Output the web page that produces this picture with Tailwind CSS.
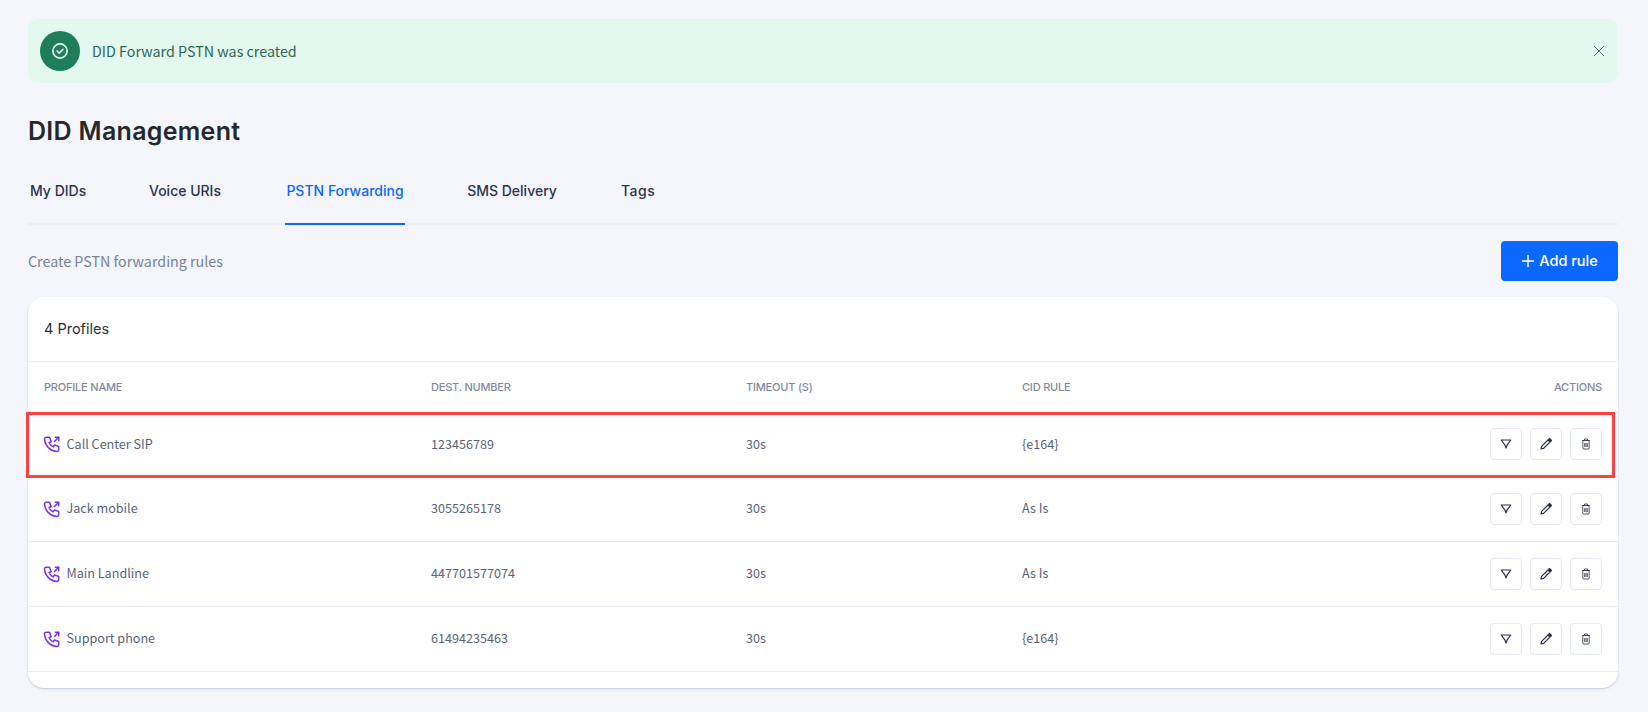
<!DOCTYPE html>
<html lang="en">
<head>
    <meta charset="UTF-8">
    <title>DID Management</title>
    <script src="https://cdn.jsdelivr.net/npm/@tailwindcss/browser@4"></script>
</head>
<body class="bg-[#f4f6fb] font-['Noto_Sans_CJK_SC','Noto_Sans',sans-serif] h-[712px] overflow-hidden">
    <main class="relative pl-[28px] pr-[30px] pt-[19px]">
        <!-- Alert -->
        <div class="flex items-center h-[64px] rounded-[10px] bg-[#e3f8ef] pl-[12px] pr-[14px]">
            <div class="flex items-center justify-center w-[40px] h-[40px] rounded-full bg-[#1e7e5c]">
                <svg class="w-[20px] h-[20px]" viewBox="0 0 24 24" fill="none" stroke="#e3f8ef" stroke-width="2" stroke-linecap="round" stroke-linejoin="round"><circle cx="12" cy="12" r="8.5"/><path d="M8.5 12l2.5 2.5l4.5 -4.5"/></svg>
            </div>
            <span class="ml-[12px] text-[14.3px] text-[#2f6650]">DID Forward PSTN was created</span>
            <svg class="ml-auto w-[10px] h-[10px]" viewBox="0 0 10 10" fill="none" stroke="#5f7a70" stroke-width="1"><path d="M0 0l10 10M10 0L0 10"/></svg>
        </div>

        <h1 class="mt-[30px] text-[25px] leading-[36px] font-semibold tracking-[0.3px] text-[#25272e] font-['Inter',sans-serif]">DID Management</h1>

        <!-- Tabs -->
        <nav class="mt-[16px] flex h-[60px] border-b-2 border-[#ebeff4] font-['Inter',sans-serif] text-[14px] font-medium text-[#2d3350] whitespace-nowrap">
            <a class="w-[58px] pt-[15px] pl-[2px] h-[60px]">My DIDs</a>
            <a class="ml-[60px] w-[78px] pt-[15px] h-[60px] text-center">Voice URIs</a>
            <a class="ml-[61px] w-[120px] pt-[15px] h-[60px] text-center text-[#0a68ff] border-b-2 border-[#0a68ff]">PSTN Forwarding</a>
            <a class="ml-[61px] w-[92px] pt-[15px] h-[60px] text-center">SMS Delivery</a>
            <a class="ml-[63px] pt-[15px] h-[60px] tracking-[0.5px]">Tags</a>
        </nav>

        <div class="mt-[16px] flex items-center justify-between h-[40px]">
            <p class="text-[14.3px] text-[#76829a]">Create PSTN forwarding rules</p>
            <button class="flex items-center justify-center gap-[4px] w-[117px] h-[40px] rounded-[4px] bg-[#0a68ff] text-white text-[14.5px] font-medium font-['Inter',sans-serif]">
                <svg class="w-[14px] h-[14px]" viewBox="0 0 14 14" fill="none" stroke="white" stroke-width="1.5"><path d="M7 1v12M1 7h12"/></svg>
                Add rule
            </button>
        </div>

        <!-- Table card -->
        <section class="mt-[16px] h-[391px] rounded-[16px] bg-white shadow-[0_1px_2px_rgba(100,116,160,0.35)] overflow-hidden">
            <div class="h-[65px] px-[16px] flex items-center border-b border-[#eef0f4] font-['Inter',sans-serif] text-[14.5px] text-[#2b2f38]">4 Profiles</div>
            <table class="w-full table-fixed">
                <thead>
                    <tr class="h-[50px] text-[11px] font-medium tracking-[-0.2px] text-[#7f8ba3] font-['Inter',sans-serif]">
                        <th class="w-[387px] pl-[16px] text-left font-medium">PROFILE NAME</th>
                        <th class="w-[315px] pl-[16px] text-left font-medium">DEST. NUMBER</th>
                        <th class="w-[276px] pl-[16px] text-left font-medium">TIMEOUT (S)</th>
                        <th class="pl-[16px] text-left font-medium">CID RULE</th>
                        <th class="w-[200px] pr-[16px] text-right font-medium">ACTIONS</th>
                    </tr>
                </thead>
                <tbody class="text-[12.6px] text-[#5a6478]">
                    <tr class="h-[64px] border-t border-[#e9edf3]">
                        <td class="pl-[16px]"><div class="flex items-center gap-[5px]">
                            <svg class="-ml-[2.5px] w-[20px] h-[20px] text-[#7a2ff0]" viewBox="0 0 24 24" fill="none" stroke="currentColor" stroke-width="1.8" stroke-linecap="round" stroke-linejoin="round"><path d="M5 4h4l2 5l-2.5 1.5a11 11 0 0 0 5 5l1.5 -2.5l5 2v4a2 2 0 0 1 -2 2a16 16 0 0 1 -15 -15a2 2 0 0 1 2 -2"/><path d="M15 9l5 -5"/><path d="M16 4h4v4"/></svg>
                            Call Center SIP</div></td>
                        <td class="pl-[16px]">123456789</td>
                        <td class="pl-[16px]">30s</td>
                        <td class="pl-[16px]">{e164}</td>
                        <td class="pr-[16px]"><div class="flex justify-end gap-[8px]">
                            <button class="flex items-center justify-center w-[32px] h-[32px] rounded-[4px] border border-[#e4e8f1]"><svg class="w-[14px] h-[14px]" viewBox="0 0 14 14" fill="none" stroke="#2d3350" stroke-width="1.2" stroke-linejoin="round"><path d="M2.2 3h9.6L8 8.200L7 11L6 8.200z"/></svg></button>
                            <button class="flex items-center justify-center w-[32px] h-[32px] rounded-[4px] border border-[#e4e8f1]"><svg class="w-[14px] h-[14px]" viewBox="0 0 14 14" fill="none" stroke="#2d3350" stroke-width="1.2" stroke-linejoin="round"><path d="M2 12l.6-2.6L9 3l2 2l-6.4 6.4z"/><path d="M9.5 2.5l1-1l2 2l-1 1z" fill="#2d3350"/></svg></button>
                            <button class="flex items-center justify-center w-[32px] h-[32px] rounded-[4px] border border-[#e4e8f1]"><svg class="w-[14px] h-[14px]" viewBox="0 0 14 14" fill="none" stroke="#3d4356" stroke-width="0.9"><path d="M3 3.500h8M5.500 3.500V2h3v1.500"/><rect x="3.800" y="3.500" width="6.400" height="8.500" rx="1"/><path d="M5.700 6v4M7 6v4M8.300 6v4"/></svg></button>
                        </div></td>
                    </tr>
                    <tr class="h-[65px] border-t border-[#e9edf3]">
                        <td class="pl-[16px]"><div class="flex items-center gap-[5px]">
                            <svg class="-ml-[2.5px] w-[20px] h-[20px] text-[#7a2ff0]" viewBox="0 0 24 24" fill="none" stroke="currentColor" stroke-width="1.8" stroke-linecap="round" stroke-linejoin="round"><path d="M5 4h4l2 5l-2.5 1.5a11 11 0 0 0 5 5l1.5 -2.5l5 2v4a2 2 0 0 1 -2 2a16 16 0 0 1 -15 -15a2 2 0 0 1 2 -2"/><path d="M15 9l5 -5"/><path d="M16 4h4v4"/></svg>
                            Jack mobile</div></td>
                        <td class="pl-[16px]">3055265178</td>
                        <td class="pl-[16px]">30s</td>
                        <td class="pl-[16px]">As Is</td>
                        <td class="pr-[16px]"><div class="flex justify-end gap-[8px]">
                            <button class="flex items-center justify-center w-[32px] h-[32px] rounded-[4px] border border-[#e4e8f1]"><svg class="w-[14px] h-[14px]" viewBox="0 0 14 14" fill="none" stroke="#2d3350" stroke-width="1.2" stroke-linejoin="round"><path d="M2.2 3h9.6L8 8.200L7 11L6 8.200z"/></svg></button>
                            <button class="flex items-center justify-center w-[32px] h-[32px] rounded-[4px] border border-[#e4e8f1]"><svg class="w-[14px] h-[14px]" viewBox="0 0 14 14" fill="none" stroke="#2d3350" stroke-width="1.2" stroke-linejoin="round"><path d="M2 12l.6-2.6L9 3l2 2l-6.4 6.4z"/><path d="M9.5 2.5l1-1l2 2l-1 1z" fill="#2d3350"/></svg></button>
                            <button class="flex items-center justify-center w-[32px] h-[32px] rounded-[4px] border border-[#e4e8f1]"><svg class="w-[14px] h-[14px]" viewBox="0 0 14 14" fill="none" stroke="#3d4356" stroke-width="0.9"><path d="M3 3.500h8M5.500 3.500V2h3v1.500"/><rect x="3.800" y="3.500" width="6.400" height="8.500" rx="1"/><path d="M5.700 6v4M7 6v4M8.300 6v4"/></svg></button>
                        </div></td>
                    </tr>
                    <tr class="h-[65px] border-t border-[#e9edf3]">
                        <td class="pl-[16px]"><div class="flex items-center gap-[5px]">
                            <svg class="-ml-[2.5px] w-[20px] h-[20px] text-[#7a2ff0]" viewBox="0 0 24 24" fill="none" stroke="currentColor" stroke-width="1.8" stroke-linecap="round" stroke-linejoin="round"><path d="M5 4h4l2 5l-2.5 1.5a11 11 0 0 0 5 5l1.5 -2.5l5 2v4a2 2 0 0 1 -2 2a16 16 0 0 1 -15 -15a2 2 0 0 1 2 -2"/><path d="M15 9l5 -5"/><path d="M16 4h4v4"/></svg>
                            Main Landline</div></td>
                        <td class="pl-[16px]">447701577074</td>
                        <td class="pl-[16px]">30s</td>
                        <td class="pl-[16px]">As Is</td>
                        <td class="pr-[16px]"><div class="flex justify-end gap-[8px]">
                            <button class="flex items-center justify-center w-[32px] h-[32px] rounded-[4px] border border-[#e4e8f1]"><svg class="w-[14px] h-[14px]" viewBox="0 0 14 14" fill="none" stroke="#2d3350" stroke-width="1.2" stroke-linejoin="round"><path d="M2.2 3h9.6L8 8.200L7 11L6 8.200z"/></svg></button>
                            <button class="flex items-center justify-center w-[32px] h-[32px] rounded-[4px] border border-[#e4e8f1]"><svg class="w-[14px] h-[14px]" viewBox="0 0 14 14" fill="none" stroke="#2d3350" stroke-width="1.2" stroke-linejoin="round"><path d="M2 12l.6-2.6L9 3l2 2l-6.4 6.4z"/><path d="M9.5 2.5l1-1l2 2l-1 1z" fill="#2d3350"/></svg></button>
                            <button class="flex items-center justify-center w-[32px] h-[32px] rounded-[4px] border border-[#e4e8f1]"><svg class="w-[14px] h-[14px]" viewBox="0 0 14 14" fill="none" stroke="#3d4356" stroke-width="0.9"><path d="M3 3.500h8M5.500 3.500V2h3v1.500"/><rect x="3.800" y="3.500" width="6.400" height="8.500" rx="1"/><path d="M5.700 6v4M7 6v4M8.300 6v4"/></svg></button>
                        </div></td>
                    </tr>
                    <tr class="h-[65px] border-y border-[#e9edf3]">
                        <td class="pl-[16px]"><div class="flex items-center gap-[5px]">
                            <svg class="-ml-[2.5px] w-[20px] h-[20px] text-[#7a2ff0]" viewBox="0 0 24 24" fill="none" stroke="currentColor" stroke-width="1.8" stroke-linecap="round" stroke-linejoin="round"><path d="M5 4h4l2 5l-2.5 1.5a11 11 0 0 0 5 5l1.5 -2.5l5 2v4a2 2 0 0 1 -2 2a16 16 0 0 1 -15 -15a2 2 0 0 1 2 -2"/><path d="M15 9l5 -5"/><path d="M16 4h4v4"/></svg>
                            Support phone</div></td>
                        <td class="pl-[16px]">61494235463</td>
                        <td class="pl-[16px]">30s</td>
                        <td class="pl-[16px]">{e164}</td>
                        <td class="pr-[16px]"><div class="flex justify-end gap-[8px]">
                            <button class="flex items-center justify-center w-[32px] h-[32px] rounded-[4px] border border-[#e4e8f1]"><svg class="w-[14px] h-[14px]" viewBox="0 0 14 14" fill="none" stroke="#2d3350" stroke-width="1.2" stroke-linejoin="round"><path d="M2.2 3h9.6L8 8.200L7 11L6 8.200z"/></svg></button>
                            <button class="flex items-center justify-center w-[32px] h-[32px] rounded-[4px] border border-[#e4e8f1]"><svg class="w-[14px] h-[14px]" viewBox="0 0 14 14" fill="none" stroke="#2d3350" stroke-width="1.2" stroke-linejoin="round"><path d="M2 12l.6-2.6L9 3l2 2l-6.4 6.4z"/><path d="M9.5 2.5l1-1l2 2l-1 1z" fill="#2d3350"/></svg></button>
                            <button class="flex items-center justify-center w-[32px] h-[32px] rounded-[4px] border border-[#e4e8f1]"><svg class="w-[14px] h-[14px]" viewBox="0 0 14 14" fill="none" stroke="#3d4356" stroke-width="0.9"><path d="M3 3.500h8M5.500 3.500V2h3v1.500"/><rect x="3.800" y="3.500" width="6.400" height="8.500" rx="1"/><path d="M5.700 6v4M7 6v4M8.300 6v4"/></svg></button>
                        </div></td>
                    </tr>
                </tbody>
            </table>
        </section>

        <!-- Red annotation box over the first row -->
        <div class="absolute left-[26px] top-[412px] w-[1589px] h-[66px] border-[3px] border-[#ff4040]"></div>
    </main>
</body>
</html>
